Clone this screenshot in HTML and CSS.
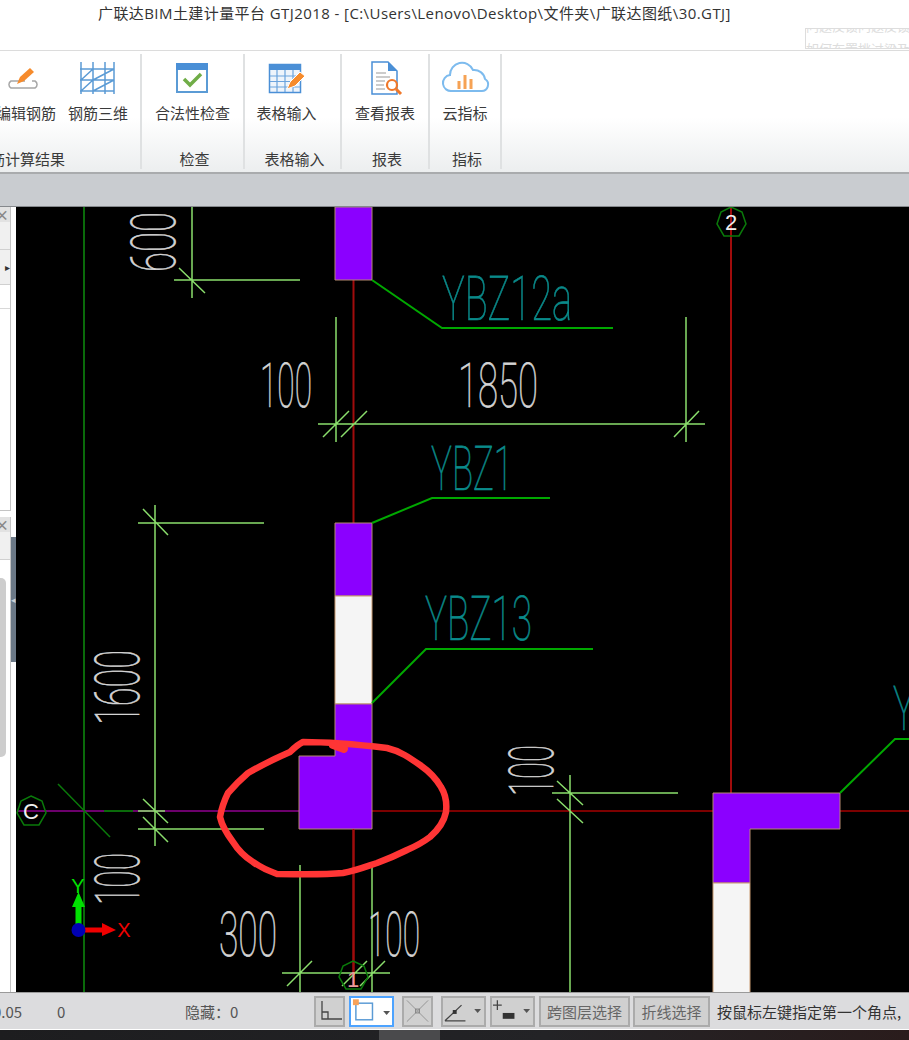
FILE: index.html
```html
<!DOCTYPE html>
<html lang="zh">
<head>
<meta charset="utf-8">
<title>广联达BIM土建计量平台 GTJ2018</title>
<link rel="stylesheet" href="styles.css">
</head>
<body>
<div class="app">
  <header class="titlebar">
    <span class="title">广联达BIM土建计量平台 GTJ2018 - [C:\Users\Lenovo\Desktop\文件夹\广联达图纸\30.GTJ]</span>
    <div class="ghost"><span>问题反馈问题反馈</span><span>如何布置挑过梁及</span></div>
  </header>
  <nav class="ribbon">
    <section class="group group-first">
      <div class="tools">
        <div class="tool"><svg class="icon" width="60" height="36" viewBox="0 0 60 36"><path class="i-gray" d="M29 21h-14a4 4 0 0 0 0 7h24a4 4 0 0 0 0-7h-3"/><path class="i-orange" d="M21 24l3-7 10-9 4 4-10 9z"/></svg><span class="label">编辑钢筋</span></div>
        <div class="tool"><svg class="icon" width="60" height="36" viewBox="0 0 60 36"><path class="i-blue" d="M13 2v32M25 2v32M37 2v32M46 2v32M12 9h34M12 20h34M12 31h34M13 20l12-11M13 31l12-11M25 20l21-11M25 31l21-11"/></svg><span class="label">钢筋三维</span></div>
      </div>
      <span class="group-label">钢筋计算结果</span>
    </section>
    <section class="group group-check">
      <div class="tools"><div class="tool"><svg class="icon" width="76" height="36" viewBox="0 0 76 36"><rect class="i-box" x="22" y="4" width="30" height="28"/><rect class="i-fill-blue" x="21" y="3" width="32" height="7"/><path class="i-check" d="M29 19l6 6 11-11"/></svg><span class="label">合法性检查</span></div></div>
      <span class="group-label">检查</span>
    </section>
    <section class="group group-table">
      <div class="tools"><div class="tool"><svg class="icon" width="60" height="36" viewBox="0 0 60 36"><rect class="i-cells" x="13.500" y="4.500" width="31" height="28"/><rect class="i-fill-blue" x="13" y="4" width="32" height="6"/><path class="i-grid" d="M14 16h30M14 21.500h30M14 27h30M21 10v22M29 10v22M37 10v22"/><path class="i-orange i-halo" d="M31 29l3-7 10-10 5 4-10 10z"/></svg><span class="label">表格输入</span></div></div>
      <span class="group-label">表格输入</span>
    </section>
    <section class="group group-report">
      <div class="tools"><div class="tool"><svg class="icon" width="60" height="36" viewBox="0 0 60 36"><path class="i-doc" d="M17 2h16l9 9v23h-25z"/><path class="i-fill-blue" d="M33 2l9 9h-9z"/><path class="i-gray-thin" d="M21 13h10M21 17h14M21 21h9M21 25h8M21 29h9"/><circle class="i-lens" cx="37" cy="25" r="5"/><path class="i-handle" d="M41 29l5 5"/></svg><span class="label">查看报表</span></div></div>
      <span class="group-label">报表</span>
    </section>
    <section class="group group-cloud">
      <div class="tools"><div class="tool"><svg class="icon" width="60" height="36" viewBox="0 0 60 36"><path class="i-cloud" d="M17 31a8 8 0 0 1-2-16a12 12 0 0 1 23-5a11 11 0 0 1 12 9a6.500 6.500 0 0 1-4 12z"/><path class="i-bars" d="M24 29v-8M30 29v-14M36 29v-10"/></svg><span class="label">云指标</span></div></div>
      <span class="group-label">指标</span>
    </section>
  </nav>
  <div class="strip"></div>
  <main class="workspace">
    <aside class="side">
      <div class="side-panel panel-a">
        <div class="tab">×</div>
        <div class="row row-a"></div>
        <div class="row row-b">▸</div>
        <div class="row row-c"></div>
      </div>
      <div class="side-panel panel-b">
        <div class="tab">×</div>
        <div class="row row-a"></div>
        <div class="thumb"></div>
        <div class="handle">◂</div>
      </div>
    </aside>
    <svg class="canvas" width="893" height="785" viewBox="16 207 893 785">
      <!-- axes -->
      <g class="axis-green"><path d="M84 207V992"/></g>
      <g class="axis-red">
        <path d="M353.500 207V985"/><path d="M731 207V793"/>
      </g>
      <path class="axis-dark-red" d="M372 811H909"/>
      <path class="axis-purple" d="M17 811H299"/>
      <path class="axis-green-thin" d="M58 784L110 837"/>
      <path class="axis-green" d="M104 811H133"/>
      <!-- columns -->
      <path class="col-purple" d="M335 207H372V280H335Z"/>
      <path class="col-purple" d="M335 523H372V596H335Z"/>
      <path class="col-white" d="M335 596H372V704H335Z"/>
      <path class="col-purple" d="M335 704H372V829H299V756H335Z"/>
      <path class="col-purple" d="M713 793H840V829H750V883H713Z"/>
      <path class="col-white" d="M713 883H750V993H713Z"/>
      <path class="axis-red" d="M353.500 829V985"/>
      <!-- dimensions -->
      <g class="dim">
        <path d="M174 280H300M192 207V298M179 268L205 293"/>
        <path d="M318 424H705M336 317V442M686 317V442M323 437L349 411M341 437L367 411M674 437L699 411"/>
        <path d="M138 523H264M138 829H264M138 811H165M155 505V846M143 509L168 535M143 799L168 823M143 817L168 842"/>
        <path d="M552 793H678M570 775V992M557 781L583 805M557 799L583 823"/>
        <path d="M300 865V992M372 865V992M282 973H390M287 986L312 961M342 986L367 961M360 986L385 961"/>
      </g>
      <!-- leaders -->
      <g class="leader">
        <path d="M372 280L442 328H613"/><path d="M372 523L432 498H550"/><path d="M372 703L426 649H593"/><path d="M840 793L895 739H909"/>
      </g>
      <!-- labels -->
      <g class="cad-teal">
        <text x="442" y="320" textLength="130" lengthAdjust="spacingAndGlyphs">YBZ12a</text>
        <text x="431" y="490" textLength="82" lengthAdjust="spacingAndGlyphs">YBZ1</text>
        <text x="425" y="640" textLength="107" lengthAdjust="spacingAndGlyphs">YBZ13</text>
        <text x="893" y="730" textLength="22" lengthAdjust="spacingAndGlyphs">Y</text>
      </g>
      <g class="cad-white">
        <text x="260" y="407" textLength="52" lengthAdjust="spacingAndGlyphs">100</text>
        <text x="458" y="407" textLength="80" lengthAdjust="spacingAndGlyphs">1850</text>
        <text x="219" y="956" textLength="58" lengthAdjust="spacingAndGlyphs">300</text>
        <text x="368" y="956" textLength="52" lengthAdjust="spacingAndGlyphs">100</text>
        <text transform="translate(175 272) rotate(-90)" textLength="60" lengthAdjust="spacingAndGlyphs">600</text>
        <text transform="translate(139 725) rotate(-90)" textLength="75" lengthAdjust="spacingAndGlyphs">1600</text>
        <text transform="translate(139 905) rotate(-90)" textLength="52" lengthAdjust="spacingAndGlyphs">100</text>
        <text transform="translate(553 796) rotate(-90)" textLength="51" lengthAdjust="spacingAndGlyphs">100</text>
      </g>
      <!-- axis bubbles -->
      <g class="bubble">
        <path d="M31 796L42 801L46 813L39 825L24 825L17 813L21 801Z"/>
        <path d="M731 207L742 212L746 224L739 236L724 236L717 224L721 212Z"/>
        <path d="M353 961L364 966L368 977L361 989L346 989L339 977L343 966Z"/>
      </g>
      <text class="bubble-text" x="31" y="819">C</text>
      <text class="bubble-text" x="731" y="230">2</text>
      <text class="bubble-text bubble-dim" x="353" y="987">1</text>
      <!-- coordinate gizmo -->
      <path class="giz-green" d="M75.500 927V907H72L78.500 892L85 907H81.500V927Z"/>
      <path class="giz-red" d="M85 927.500H102V923L116 930L102 936V932.500H85Z"/>
      <circle class="giz-blue" cx="78.500" cy="930" r="7"/>
      <text class="giz-y" x="78" y="893">Y</text>
      <text class="giz-x" x="124" y="937">X</text>
      <!-- hand drawn circle -->
      <path class="scribble" d="M303 742C320 742 345 743 387 748C400 751 410 758 420 765C430 772 437 780 441 787C446 795 447 803 446 812C444 822 438 830 430 837C422 843 414 847 407 850C395 856 385 860 377 863C365 867 355 871 343 873C320 875 300 874 277 874C268 871 260 867 253 862C245 857 238 850 233 842C227 834 222 826 220 817C222 806 225 799 228 793C235 785 241 779 248 773C262 765 276 758 290 752C295 747 299 744 303 742Z"/>
      <path class="scribble-dot" d="M333 745L344 749"/>
    </svg>
  </main>
  <footer class="statusbar">
    <span class="st st-coord">0.05</span>
    <span class="st st-zero">0</span>
    <span class="st st-hidden">隐藏：0</span>
    <div class="st-tools">
      <button class="btn btn-sq"><svg width="24" height="24" viewBox="0 0 24 24"><path class="b-line" d="M4 2v18h20M4 13h6v7"/></svg></button>
      <button class="btn btn-active"><svg width="42" height="28" viewBox="0 0 42 28"><rect class="b-blue" x="5" y="6" width="17" height="17"/><rect class="b-orange" x="2" y="2" width="6" height="6"/><path class="b-tri" d="M33 14h7l-3.500 4z"/></svg></button>
      <button class="btn btn-sq btn-off"><svg width="28" height="28" viewBox="0 0 28 28"><path class="b-cross" d="M3 3L25 25M25 3L3 25"/><rect class="b-cross-dot" x="12" y="12" width="4" height="4"/></svg></button>
      <button class="btn btn-drop"><svg width="42" height="28" viewBox="0 0 42 28"><path class="b-line" d="M2 24L19 8M2 24H23"/><rect class="b-dark" x="10" y="13" width="4" height="4"/><path class="b-tri" d="M32 12h7l-3.500 4z"/></svg></button>
      <button class="btn btn-drop"><svg width="42" height="28" viewBox="0 0 42 28"><path class="b-line" d="M1 8h9M5.500 3v10"/><rect class="b-dark" x="11" y="16" width="12" height="6"/><path class="b-tri" d="M32 12h7l-3.500 4z"/></svg></button>
      <button class="btn btn-text btn-layer">跨图层选择</button>
      <button class="btn btn-text btn-poly">折线选择</button>
      <span class="st-msg">按鼠标左键指定第一个角点,</span>
    </div>
  </footer>
  <div class="taskbar"><div class="task-item"></div></div>
</div>
</body>
</html>
```
FILE: styles.css
```css
* { box-sizing: border-box; }
html, body { margin: 0; padding: 0; height: 100%; overflow: hidden; background: #fff; }
body { font-family: "Noto Sans CJK SC", "Liberation Sans", sans-serif; font-size: 15px; color: #333; }
.app { width: 909px; height: 1040px; display: flex; flex-direction: column; overflow: hidden; }

/* title */
.titlebar { height: 51px; flex: none; background: #fff; border-bottom: 1px solid #dcdcdc; position: relative; padding: 2px 0 0 98px; }
.title { font-family: "Open Sans", "Noto Sans CJK SC", sans-serif; font-size: 15px; letter-spacing: .42px; line-height: 22px; color: #333; white-space: nowrap; }
.ghost { position: absolute; left: 805px; top: 28px; width: 104px; height: 21px; border: 1px solid #ddd; border-right: 0; overflow: hidden; color: #ddd; font-size: 13px; line-height: 23px; white-space: nowrap; }
.ghost span { display: block; height: 23px; }
.ghost span:first-child { margin-top: -15px; }

/* ribbon */
.ribbon { height: 123px; flex: none; display: flex; background: linear-gradient(#fff 0, #fff 55%, #eceeef 100%); border-bottom: 2px solid #a9abad; }
.group { height: 115px; margin-top: 3px; display: flex; flex-direction: column; justify-content: space-between; align-items: center; border-right: 2px solid #dfe1e2; padding-top: 6px; }
.group-first { width: 142px; align-items: flex-end; padding-right: 12px; }
.group-check { width: 103px; }
.group-table { width: 97px; }
.group-report { width: 88px; }
.group-cloud { width: 72px; }
.tools { display: flex; gap: 12px; }
.tool { display: flex; flex-direction: column; align-items: center; white-space: nowrap; }
.icon { display: block; margin-bottom: 7px; }
.label { font-size: 15px; line-height: 20px; color: #3a3a3a; }
.group-label { font-size: 15px; line-height: 20px; color: #3a3a3a; padding-left: 4px; white-space: nowrap; }
.group-first .group-label { margin-right: 63px; padding-left: 0; }
.group-table .tools { padding-right: 12px; }

.i-gray { fill: none; stroke: #a6a6a6; stroke-width: 1.500; }
.i-gray-thin { fill: none; stroke: #9a9a9a; stroke-width: 1.200; }
.i-orange { fill: #f68b2c; }
.i-halo { stroke: #fff; stroke-width: 1; }
.i-blue { fill: none; stroke: #5b9bd5; stroke-width: 1.500; }
.i-box { fill: #fff; stroke: #5b9bd5; stroke-width: 2; }
.i-cells { fill: #eef4fb; stroke: #4a8fd6; stroke-width: 1.500; }
.i-grid { fill: none; stroke: #6ba3dd; stroke-width: 1.200; }
.i-fill-blue { fill: #4a8fd6; }
.i-check { fill: none; stroke: #70ad47; stroke-width: 3.500; }
.i-doc { fill: #fff; stroke: #4a8fd6; stroke-width: 1.500; }
.i-lens { fill: #fff; stroke: #f0782a; stroke-width: 2.200; }
.i-handle { stroke: #f0782a; stroke-width: 3; }
.i-cloud { fill: #fff; stroke: #7dbbee; stroke-width: 2; }
.i-bars { fill: none; stroke: #f6a254; stroke-width: 3; }

.strip { height: 33px; flex: none; background: #c9ccd0; border-bottom: 1px solid #85888c; }

/* workspace */
.workspace { height: 785px; flex: none; display: flex; background: #000; }
.side { width: 16px; flex: none; background: #fff; display: flex; flex-direction: column; }
.side-panel { width: 11px; background: #fff; border-right: 1px solid #c4c4c4; display: flex; flex-direction: column; position: relative; }
.panel-a { height: 304px; border-bottom: 1px solid #c4c4c4; margin-bottom: 6px; }
.panel-b { flex: 1; }
.tab { height: 15px; background: #e2e2e2; color: #888; font-size: 14px; font-weight: 700; line-height: 14px; text-indent: -5px; overflow: hidden; }
.row { overflow: hidden; }
.row-a { height: 28px; background: #f0f0f0; border-bottom: 1px solid #d0d0d0; }
.row-b { height: 35px; background: #f0f0f0; border-bottom: 1px solid #d0d0d0; font-size: 10px; line-height: 33px; color: #333; text-align: right; }
.row-c { height: 24px; border-bottom: 1px solid #d8d8d8; }
.thumb { width: 6px; height: 179px; margin-top: 18px; background: #cdcdcd; border-radius: 0 5px 5px 0; }
.handle { position: absolute; left: 11px; top: 20px; width: 5px; height: 125px; background: #6c7987; color: #c9ced3; font-size: 9px; line-height: 125px; overflow: hidden; }

/* canvas */
.canvas { display: block; flex: none; background: #000; }
.canvas path { fill: none; }
.axis-green, .axis-green path { stroke: #0a6a0a; stroke-width: 2; }
.axis-green-thin { stroke: #0a7a0a; stroke-width: 1.500; }
.axis-red, .axis-red path { stroke: #a00c0c; stroke-width: 2; }
.axis-dark-red { stroke: #7c0000; stroke-width: 2; }
.axis-purple { stroke: #6c006c; stroke-width: 2; }
.canvas .col-purple { fill: #8b00ff; stroke: #b48a6e; stroke-width: 1; }
.canvas .col-white { fill: #f5f5f5; stroke: #c89a70; stroke-width: 1; }
.dim path { stroke: #8ade6c; stroke-width: 1.500; }
.leader path { stroke: #00a800; stroke-width: 2; }
.cad-teal text, .cad-white text { font-family: "Roboto", "Liberation Sans", sans-serif; font-weight: 100; font-size: 62px; text-rendering: geometricPrecision; stroke-width: .7; }
.cad-teal text { fill: #0a8a8a; stroke: #0a8a8a; }
.cad-white text { fill: #d4d4d4; stroke: #d4d4d4; }
.bubble path { stroke: #0a7a0a; stroke-width: 1.500; }
.bubble-text { font-family: "Liberation Sans", sans-serif; font-size: 22px; fill: #eee; text-anchor: middle; }
.bubble-dim { fill: #e89a9a; }
.canvas .giz-green { fill: #00e000; }
.canvas .giz-red { fill: #f00000; }
.giz-blue { fill: #0000b4; }
.giz-y, .giz-x { font-family: "Liberation Sans", sans-serif; font-size: 20px; text-anchor: middle; }
.giz-y { fill: #00e000; }
.giz-x { fill: #f00000; }
.scribble { stroke: #ff3535; stroke-width: 6.500; stroke-linejoin: round; }
.scribble-dot { stroke: #ff3535; stroke-width: 8; stroke-linecap: round; }

/* status */
.statusbar { height: 38px; flex: none; background: #dcdcde; border-top: 1px solid #9a9a9a; border-bottom: 1px solid #fff; display: flex; align-items: center; font-size: 15px; color: #555; }
.st { white-space: nowrap; flex: none; }
.st-coord { margin-left: -7px; width: 64px; }
.st-zero { width: 128px; }
.st-hidden { width: 129px; }
.st-tools { display: flex; flex: none; align-items: center; white-space: nowrap; }
.btn { height: 31px; padding: 0; flex: none; display: flex; align-items: center; justify-content: center; background: #d0d0d0; border: 2px solid #ababab; font: inherit; color: #666; }
.btn-sq { width: 31px; }
.btn-off { margin-left: 8px; }
.btn-off svg { opacity: .85; }
.btn-active { width: 45px; margin-left: 4px; background: #fff; border-color: #4da3ff; }
.btn-drop { width: 45px; margin-left: 8px; }
.btn-drop + .btn-drop { margin-left: 4px; }
.btn-text { font-size: 15px; }
.btn-layer { width: 91px; margin-left: 4px; }
.btn-poly { width: 77px; margin-left: 3px; }
.st-msg { margin-left: 7px; color: #333; font-size: 15px; }
.b-line { fill: none; stroke: #444; stroke-width: 1.300; }
.b-blue { fill: #fff; stroke: #5b9bd5; stroke-width: 1.500; }
.b-orange { fill: #f7a25a; }
.b-tri { fill: #555; }
.b-cross { fill: none; stroke: #888; stroke-width: 1; }
.b-cross-dot { fill: none; stroke: #777; stroke-width: 1; }
.b-dark { fill: #333; }

.taskbar { flex: 1; background: linear-gradient(90deg, #1d1d1f, #232326 60%, #2a1c1c); padding-left: 379px; }
.task-item { width: 61px; height: 100%; background: #4a4a4c; }
```
